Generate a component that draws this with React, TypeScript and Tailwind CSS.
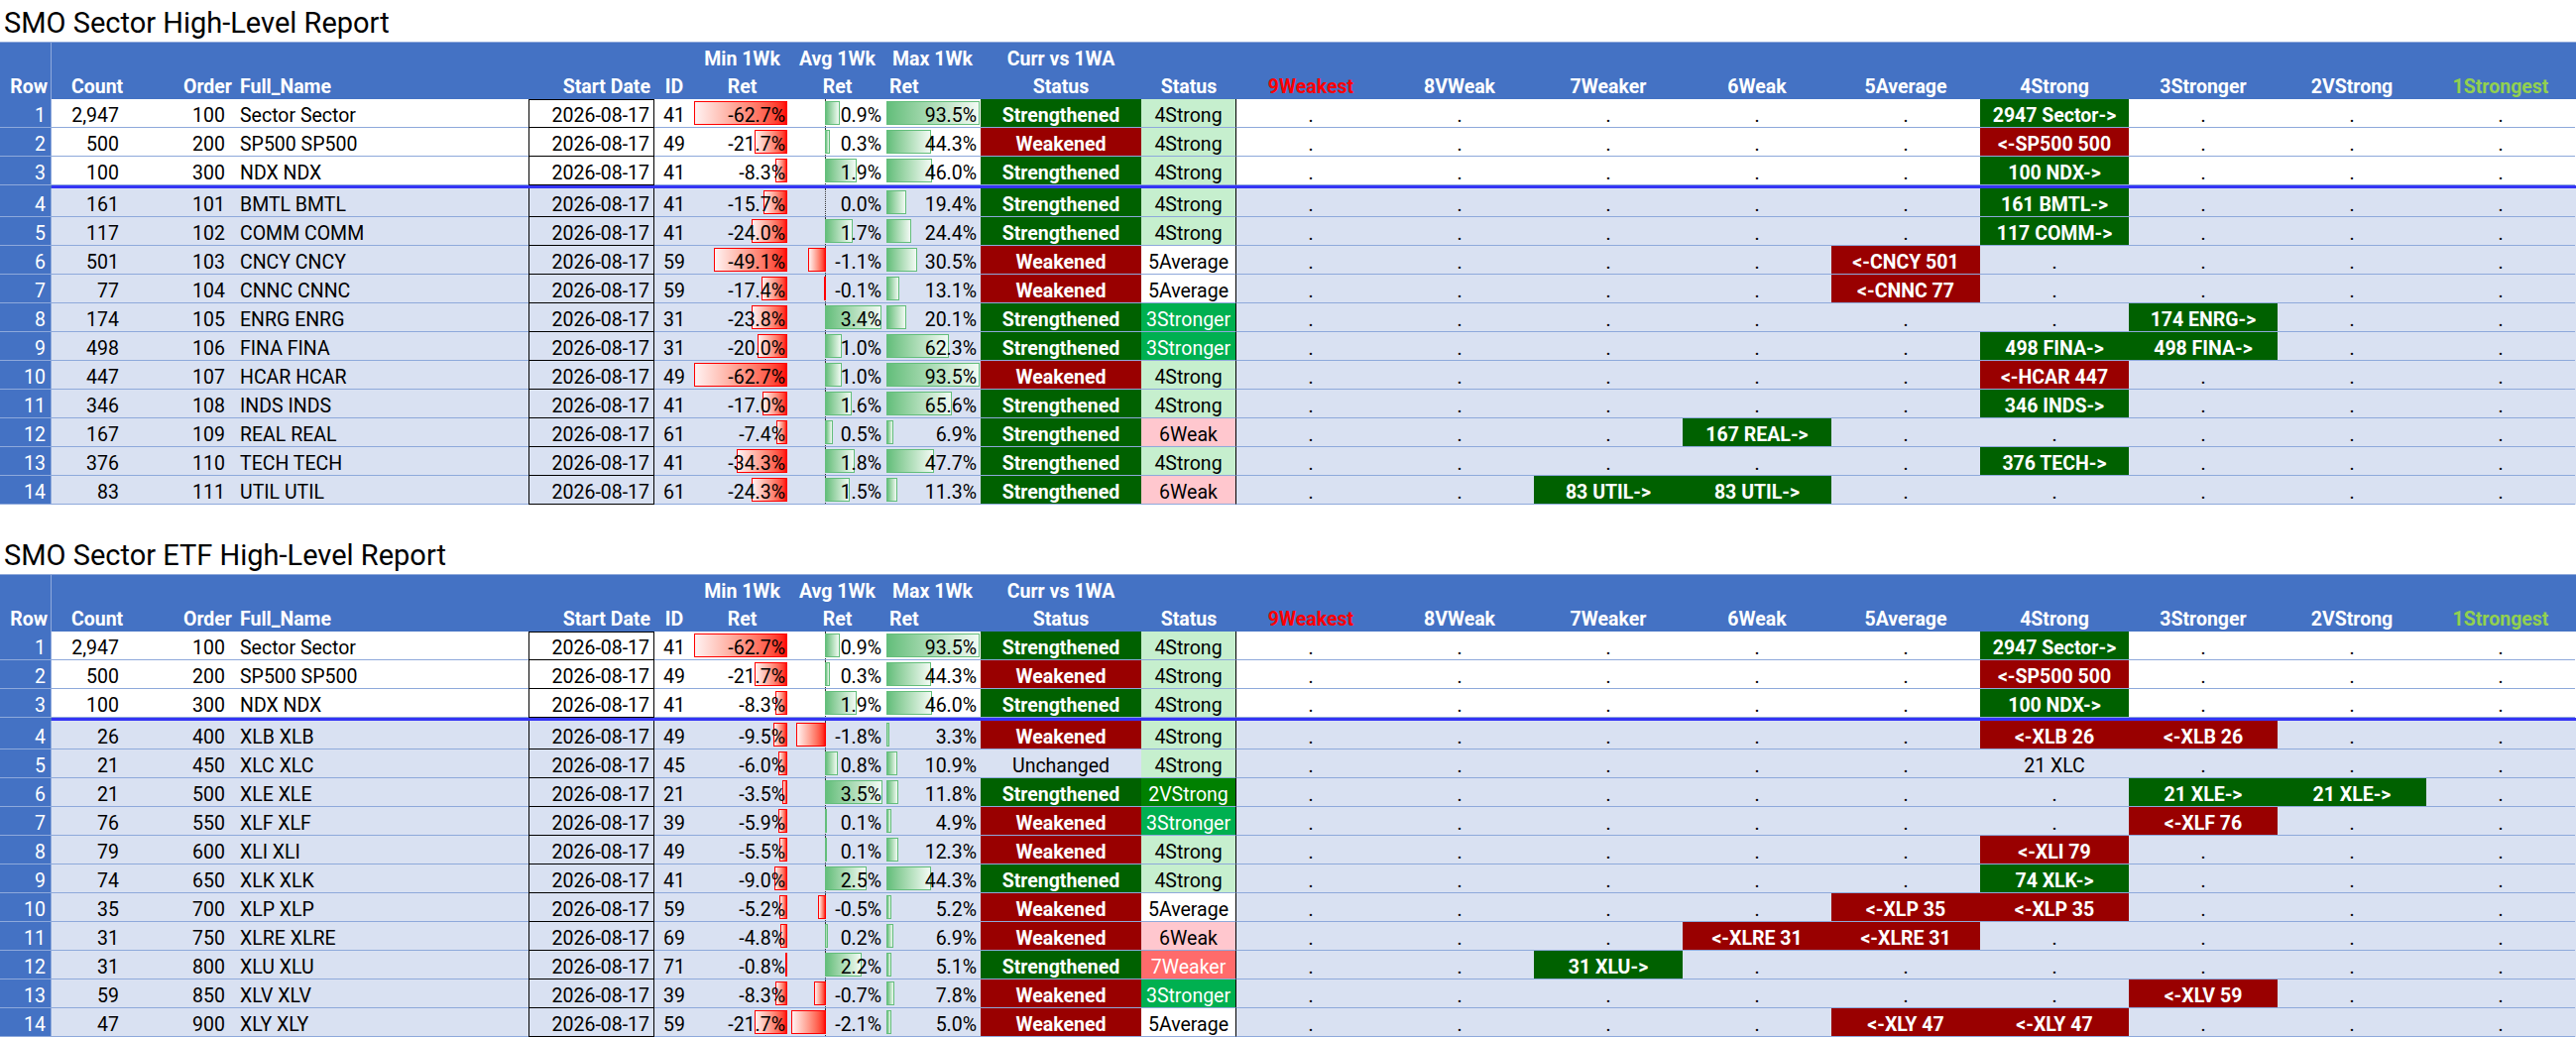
type Status = 'S' | 'W' | 'U';

interface Rec {
  count: string;
  order: number;
  name: string;
  id: number;
  min: number;
  avg: number;
  max: number;
  status: Status;
  rank: string;
  marks: Record<number, string>;
}

const r = (
  count: string,
  order: number,
  name: string,
  id: number,
  min: number,
  avg: number,
  max: number,
  status: Status,
  rank: string,
  marks: Record<number, string>,
): Rec => ({ count, order, name, id, min, avg, max, status, rank, marks });

const RANKS = ['9Weakest', '8VWeak', '7Weaker', '6Weak', '5Average', '4Strong', '3Stronger', '2VStrong', '1Strongest'];

const TOP = [
  r('2,947', 100, 'Sector Sector', 41, -62.7, 0.9, 93.5, 'S', '4Strong', { 5: '2947 Sector->' }),
  r('500', 200, 'SP500 SP500', 49, -21.7, 0.3, 44.3, 'W', '4Strong', { 5: '<-SP500 500' }),
  r('100', 300, 'NDX NDX', 41, -8.3, 1.9, 46.0, 'S', '4Strong', { 5: '100 NDX->' }),
];

const SECTORS = [
  ...TOP,
  r('161', 101, 'BMTL BMTL', 41, -15.7, 0.0, 19.4, 'S', '4Strong', { 5: '161 BMTL->' }),
  r('117', 102, 'COMM COMM', 41, -24.0, 1.7, 24.4, 'S', '4Strong', { 5: '117 COMM->' }),
  r('501', 103, 'CNCY CNCY', 59, -49.1, -1.1, 30.5, 'W', '5Average', { 4: '<-CNCY 501' }),
  r('77', 104, 'CNNC CNNC', 59, -17.4, -0.1, 13.1, 'W', '5Average', { 4: '<-CNNC 77' }),
  r('174', 105, 'ENRG ENRG', 31, -23.8, 3.4, 20.1, 'S', '3Stronger', { 6: '174 ENRG->' }),
  r('498', 106, 'FINA FINA', 31, -20.0, 1.0, 62.3, 'S', '3Stronger', { 5: '498 FINA->', 6: '498 FINA->' }),
  r('447', 107, 'HCAR HCAR', 49, -62.7, 1.0, 93.5, 'W', '4Strong', { 5: '<-HCAR 447' }),
  r('346', 108, 'INDS INDS', 41, -17.0, 1.6, 65.6, 'S', '4Strong', { 5: '346 INDS->' }),
  r('167', 109, 'REAL REAL', 61, -7.4, 0.5, 6.9, 'S', '6Weak', { 3: '167 REAL->' }),
  r('376', 110, 'TECH TECH', 41, -34.3, 1.8, 47.7, 'S', '4Strong', { 5: '376 TECH->' }),
  r('83', 111, 'UTIL UTIL', 61, -24.3, 1.5, 11.3, 'S', '6Weak', { 2: '83 UTIL->', 3: '83 UTIL->' }),
];

const ETFS = [
  ...TOP,
  r('26', 400, 'XLB XLB', 49, -9.5, -1.8, 3.3, 'W', '4Strong', { 5: '<-XLB 26', 6: '<-XLB 26' }),
  r('21', 450, 'XLC XLC', 45, -6.0, 0.8, 10.9, 'U', '4Strong', { 5: '21 XLC' }),
  r('21', 500, 'XLE XLE', 21, -3.5, 3.5, 11.8, 'S', '2VStrong', { 6: '21 XLE->', 7: '21 XLE->' }),
  r('76', 550, 'XLF XLF', 39, -5.9, 0.1, 4.9, 'W', '3Stronger', { 6: '<-XLF 76' }),
  r('79', 600, 'XLI XLI', 49, -5.5, 0.1, 12.3, 'W', '4Strong', { 5: '<-XLI 79' }),
  r('74', 650, 'XLK XLK', 41, -9.0, 2.5, 44.3, 'S', '4Strong', { 5: '74 XLK->' }),
  r('35', 700, 'XLP XLP', 59, -5.2, -0.5, 5.2, 'W', '5Average', { 4: '<-XLP 35', 5: '<-XLP 35' }),
  r('31', 750, 'XLRE XLRE', 69, -4.8, 0.2, 6.9, 'W', '6Weak', { 3: '<-XLRE 31', 4: '<-XLRE 31' }),
  r('31', 800, 'XLU XLU', 71, -0.8, 2.2, 5.1, 'S', '7Weaker', { 2: '31 XLU->' }),
  r('59', 850, 'XLV XLV', 39, -8.3, -0.7, 7.8, 'W', '3Stronger', { 6: '<-XLV 59' }),
  r('47', 900, 'XLY XLY', 59, -21.7, -2.1, 5.0, 'W', '5Average', { 4: '<-XLY 47', 5: '<-XLY 47' }),
];

const GRID =
  'grid grid-cols-[52px_72px_113px_296px_127px_40px_97px_95px_97px_162px_96px_repeat(9,150px)]';

const CELL = 'relative flex h-full items-end whitespace-nowrap border-b border-[#8EA9DB]';

const RANK_STYLE: Record<string, string> = {
  '4Strong': 'bg-[#C6EFCE] text-black',
  '3Stronger': 'bg-[#00B050] text-white',
  '2VStrong': 'bg-[#008000] text-white',
  '5Average': 'bg-white text-black',
  '6Weak': 'bg-[#FFC7CE] text-black',
  '7Weaker': 'bg-[#FF6B6B] text-white',
};

const pct = (v: number) => `${v.toFixed(1)}%`;

function Header() {
  return (
    <div className="border-t border-[#8EA9DB] bg-[#4472C4] font-bold text-white">
      <div className={`${GRID} h-[28px]`}>
        <div className="border-r border-[#8EA9DB]" />
        <div />
        <div />
        <div />
        <div />
        <div />
        <div className="flex items-end justify-center whitespace-nowrap">Min 1Wk</div>
        <div className="flex items-end justify-center whitespace-nowrap">Avg 1Wk</div>
        <div className="flex items-end justify-center whitespace-nowrap">Max 1Wk</div>
        <div className="flex items-end justify-center whitespace-nowrap">Curr vs 1WA</div>
      </div>
      <div className={`${GRID} h-[29px] [&>div]:flex [&>div]:items-end [&>div]:whitespace-nowrap [&>div]:pb-[1px]`}>
        <div className="justify-end border-r border-[#8EA9DB] pr-[3px]">Row</div>
        <div className="pl-[20px]">Count</div>
        <div className="justify-end pr-[3px]">Order</div>
        <div className="pl-[5px]">Full_Name</div>
        <div className="justify-end pr-[4px]">Start Date</div>
        <div className="justify-center">ID</div>
        <div className="justify-center">Ret</div>
        <div className="justify-center">Ret</div>
        <div className="pl-[5px]">Ret</div>
        <div className="justify-center">Status</div>
        <div className="justify-center">Status</div>
        {RANKS.map((name) => (
          <div
            key={name}
            className={`justify-center ${
              name === '9Weakest' ? 'text-[#FF0000]' : name === '1Strongest' ? 'text-[#92D050]' : ''
            }`}
          >
            {name}
          </div>
        ))}
      </div>
    </div>
  );
}

function DataRow({ rec, n }: { rec: Rec; n: number }) {
  const rowBg = n <= 3 ? 'bg-white' : 'bg-[#D9E1F2]';
  const statusCls =
    rec.status === 'S'
      ? 'bg-[#006100] font-bold text-white'
      : rec.status === 'W'
        ? 'bg-[#990000] font-bold text-white'
        : '';
  const statusText = rec.status === 'S' ? 'Strengthened' : rec.status === 'W' ? 'Weakened' : 'Unchanged';

  return (
    <div className={`${GRID} h-[29px] ${rowBg}`}>
      <div className={`${CELL} justify-end border-r bg-[#4472C4] pr-[5px] text-white`}>{n}</div>
      <div className={`${CELL} justify-end pr-[4px]`}>{rec.count}</div>
      <div className={`${CELL} justify-end pr-[10px]`}>{rec.order}</div>
      <div className={`${CELL} pl-[5px]`}>{rec.name}</div>
      <div
        className={`${CELL} justify-end border-x border-b-black border-x-black pr-[4px] ${
          n === 1 ? 'border-t border-t-black' : ''
        }`}
      >
        2026-08-17
      </div>
      <div className={`${CELL} justify-center`}>{rec.id}</div>

      {/* Min 1Wk: red bars anchored on the right */}
      <div className={`${CELL} justify-end pr-[5px]`}>
        {rec.min !== 0 && (
          <div
            className="absolute top-[2px] right-[3px] bottom-[2px] border border-[#FF0000] bg-linear-to-r from-[#FFF2F2] to-[#FF0000]"
            style={{ width: Math.abs(rec.min) * 1.5 }}
          />
        )}
        <span className="relative">{pct(rec.min)}</span>
      </div>

      {/* Avg 1Wk: axis bars */}
      <div className={`${CELL} justify-end pr-[3px]`}>
        <div className="absolute top-0 bottom-0 left-[35px] border-l border-dotted border-[#333]" />
        {rec.avg > 0 && (
          <div
            className="absolute top-[2px] bottom-[2px] left-[35px] border border-[#63BE7B] bg-linear-to-r from-[#63BE7B] to-[#F2FAF4]"
            style={{ width: rec.avg * 16.7 }}
          />
        )}
        {rec.avg < 0 && (
          <div
            className="absolute top-[2px] right-[59px] bottom-[2px] border border-[#FF0000] bg-linear-to-r from-[#FFF2F2] to-[#FF0000]"
            style={{ width: Math.abs(rec.avg) * 16.7 }}
          />
        )}
        <span className="relative">{pct(rec.avg)}</span>
      </div>

      {/* Max 1Wk: green bars from the left */}
      <div className={`${CELL} justify-end pr-[4px]`}>
        <div
          className="absolute top-[2px] bottom-[2px] left-[2px] border border-[#63BE7B] bg-linear-to-r from-[#63BE7B] to-[#F2FAF4]"
          style={{ width: (rec.max * 94) / 93.5 }}
        />
        <span className="relative">{pct(rec.max)}</span>
      </div>

      <div className={`${CELL} justify-center ${statusCls}`}>{statusText}</div>
      <div className={`${CELL} justify-center border-r border-r-black ${RANK_STYLE[rec.rank]}`}>{rec.rank}</div>

      {RANKS.map((_, i) => {
        const mark = rec.marks[i];
        if (!mark) {
          return (
            <div key={i} className={`${CELL} justify-center`}>
              .
            </div>
          );
        }
        return (
          <div key={i} className={`${CELL} justify-center ${rec.status === 'U' ? '' : statusCls}`}>
            {mark}
          </div>
        );
      })}
    </div>
  );
}

function Report({ title, rows, first }: { title: string; rows: Rec[]; first?: boolean }) {
  return (
    <section>
      {!first && <div className="h-[28px]" />}
      <h1 className="flex h-[42px] items-end pb-[2px] pl-[4px] text-[29px] leading-[34px]">{title}</h1>
      <Header />
      {rows.map((rec, i) => (
        <div key={i}>
          {i === 3 && (
            <div className="flex h-[3px]">
              <div className="w-[52px] bg-[#4472C4]" />
              <div className="flex-1 bg-[#3434F5]" />
            </div>
          )}
          <DataRow rec={rec} n={i + 1} />
        </div>
      ))}
    </section>
  );
}

export default function App() {
  return (
    <main className="min-h-screen w-[2598px] bg-white font-[family-name:Roboto,'Liberation_Sans',sans-serif] text-[19.5px] leading-[22px] text-black">
      <Report title="SMO Sector High-Level Report" rows={SECTORS} first />
      <Report title="SMO Sector ETF High-Level Report" rows={ETFS} />
    </main>
  );
}
